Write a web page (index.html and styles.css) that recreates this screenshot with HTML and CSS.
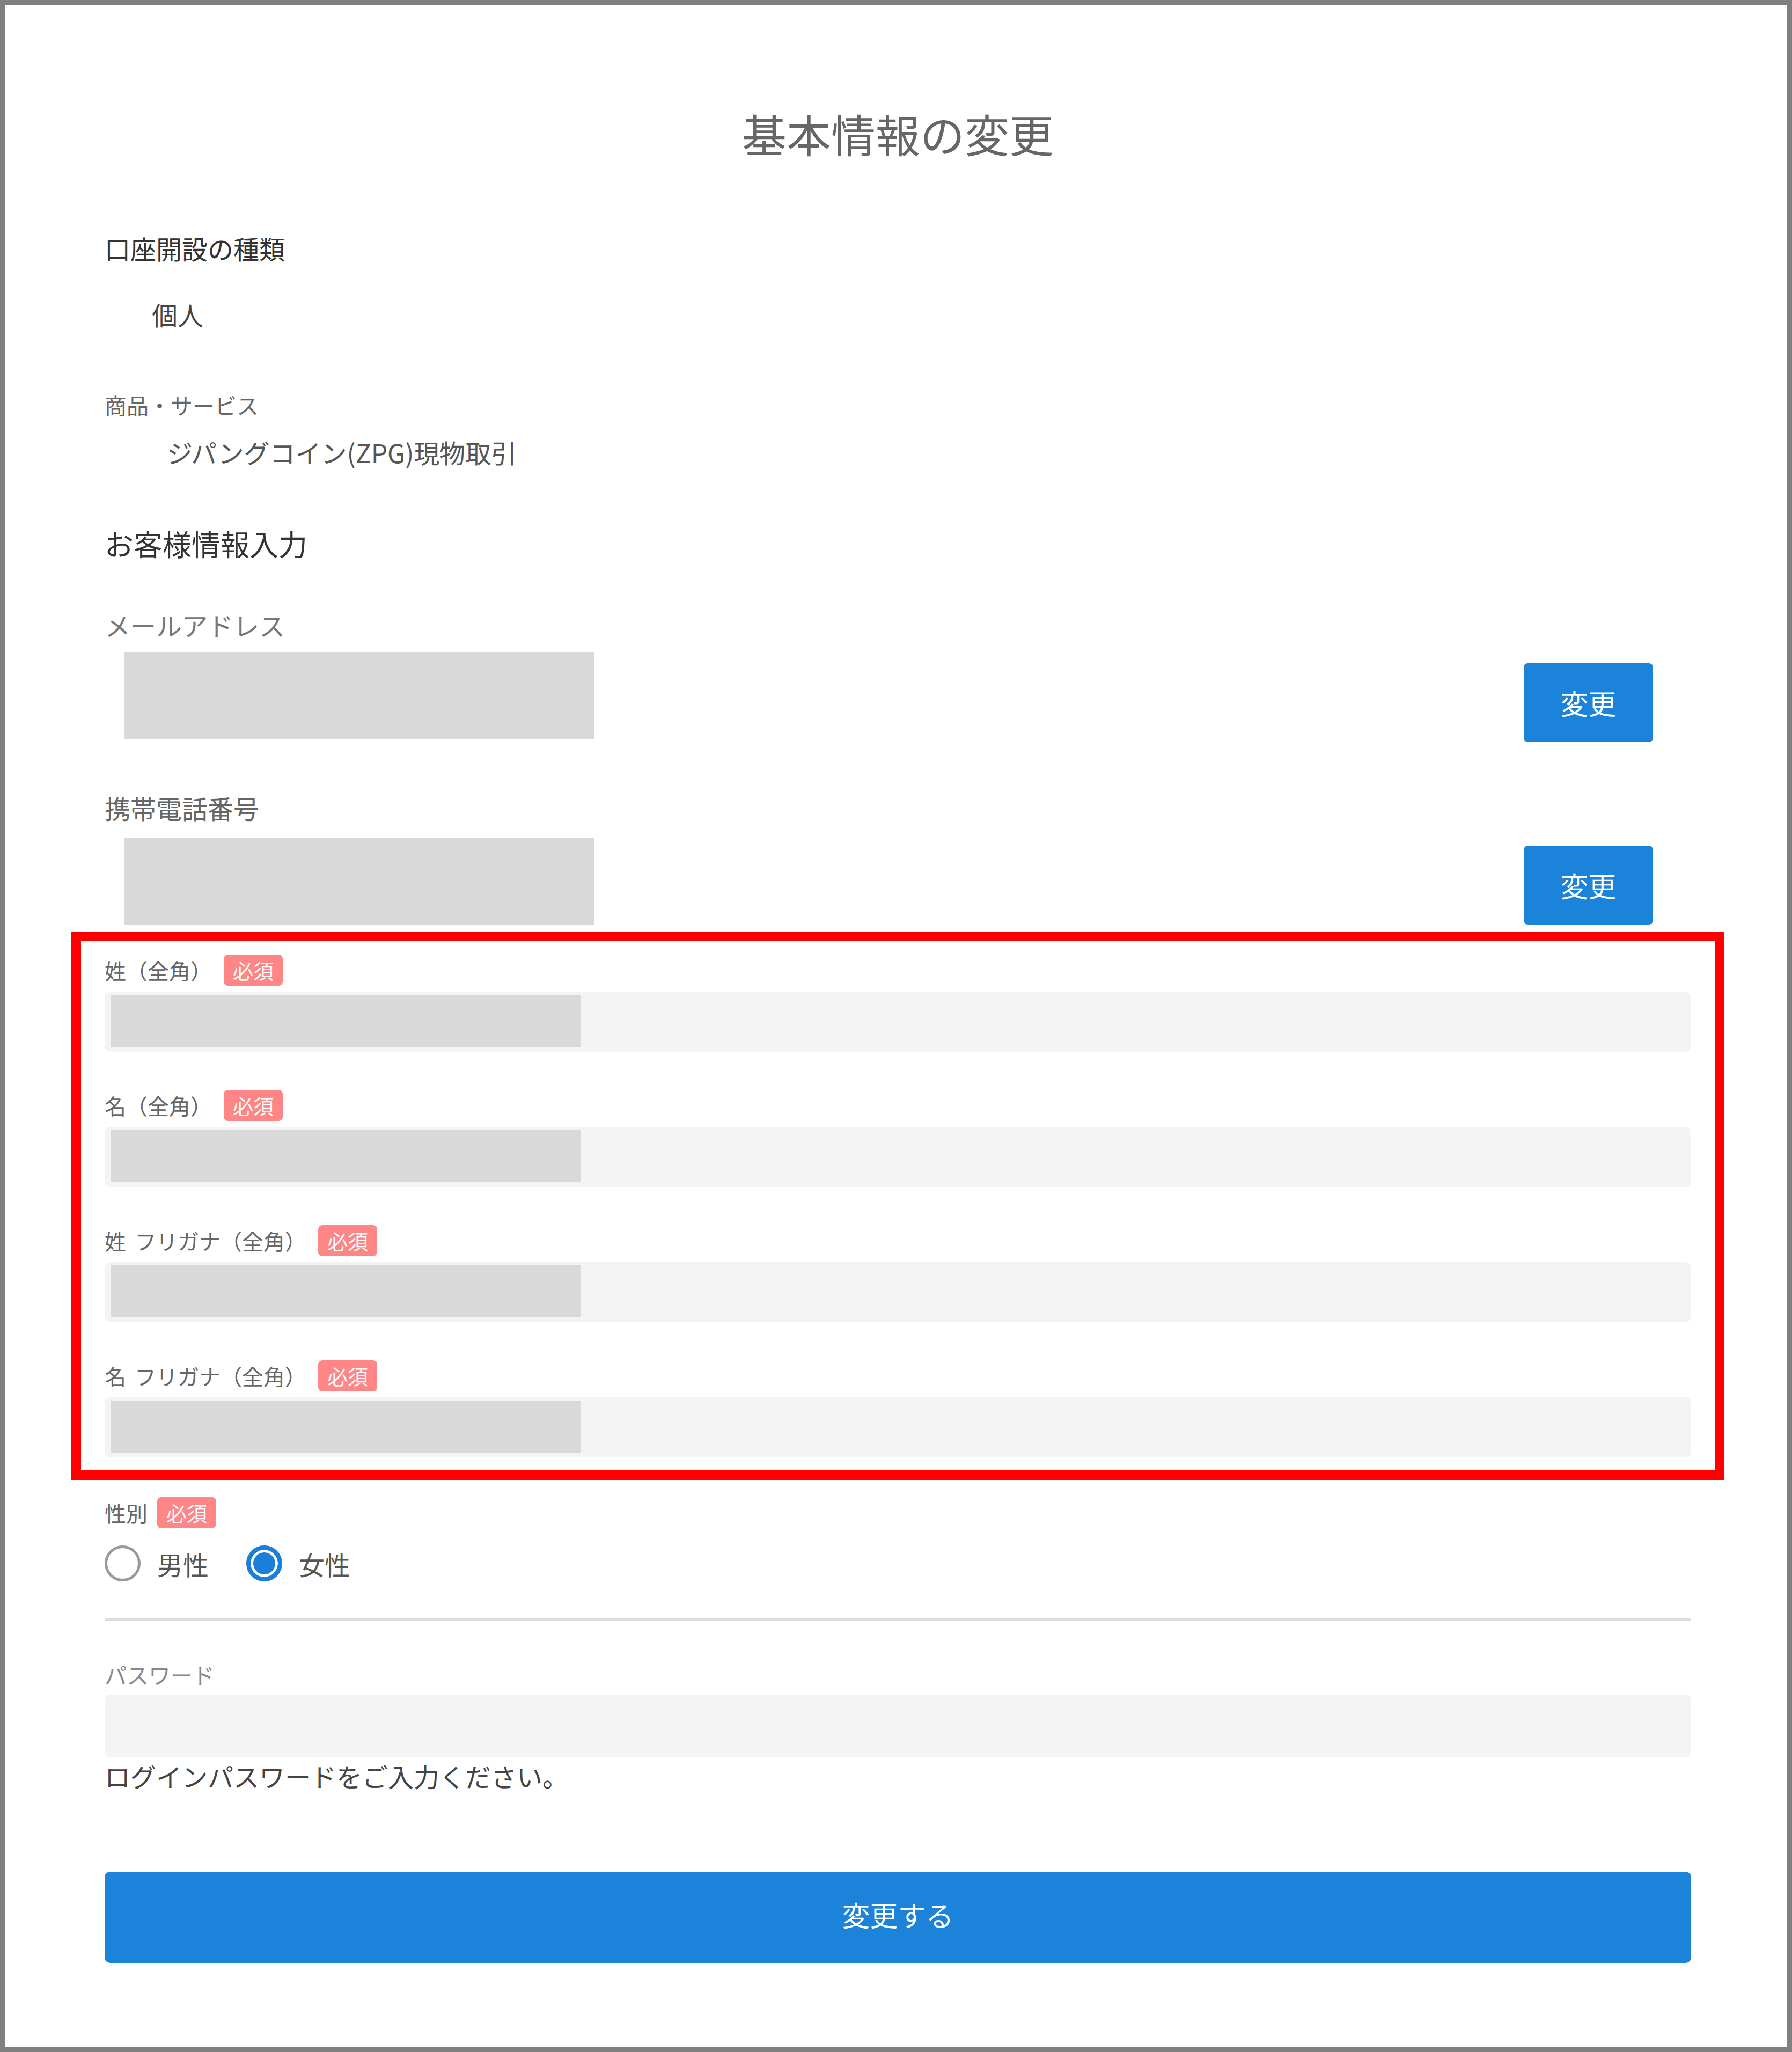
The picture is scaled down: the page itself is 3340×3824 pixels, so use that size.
FILE: index.html
```html
<!DOCTYPE html>
<html lang="ja">

<head>
    <meta charset="UTF-8">
    <title>基本情報の変更</title>
    <link rel="stylesheet" href="styles.css">
</head>

<body>
    <div class="page">
        <h1 class="title">基本情報の変更</h1>

        <h2 class="info-head">口座開設の種類</h2>
        <p class="info-value">個人</p>

        <h3 class="info-sub">商品・サービス</h3>
        <p class="info-value service">ジパングコイン(ZPG)現物取引</p>

        <h2 class="section-head">お客様情報入力</h2>

        <div class="contact">
            <div class="contact-label">メールアドレス</div>
            <div class="contact-row">
                <span class="masked"></span>
                <button class="btn-change">変更</button>
            </div>
        </div>

        <div class="contact contact-phone">
            <div class="contact-label">携帯電話番号</div>
            <div class="contact-row">
                <span class="masked"></span>
                <button class="btn-change">変更</button>
            </div>
        </div>

        <div class="highlight">
            <div class="field">
                <div class="field-label"><span>姓（全角）</span><span class="req">必須</span></div>
                <div class="field-input"><span class="mask"></span></div>
            </div>
            <div class="field">
                <div class="field-label"><span>名（全角）</span><span class="req">必須</span></div>
                <div class="field-input"><span class="mask"></span></div>
            </div>
            <div class="field">
                <div class="field-label"><span>姓 フリガナ（全角）</span><span class="req">必須</span></div>
                <div class="field-input"><span class="mask"></span></div>
            </div>
            <div class="field">
                <div class="field-label"><span>名 フリガナ（全角）</span><span class="req">必須</span></div>
                <div class="field-input"><span class="mask"></span></div>
            </div>
        </div>

        <div class="field-label gender-label"><span>性別</span><span class="req">必須</span></div>
        <div class="radios">
            <label class="radio"><input type="radio" name="gender"><span>男性</span></label>
            <label class="radio"><input type="radio" name="gender" checked><span>女性</span></label>
        </div>

        <hr class="divider">

        <div class="pw-label">パスワード</div>
        <div class="pw-input"></div>
        <p class="pw-help">ログインパスワードをご入力ください。</p>

        <button class="submit">変更する</button>
    </div>
</body>

</html>
```

FILE: styles.css
```css
* {
    box-sizing: border-box;
}

body {
    margin: 0;
    font-family: "Noto Sans CJK JP", "Noto Sans", sans-serif;
    background: #fff;
}

h1,
h2,
h3,
p {
    margin: 0;
    font-weight: normal;
}

.page {
    width: 3340px;
    height: 3824px;
    border: 9px solid #808080;
    padding: 189px 179px 0 186px;
    background: #fff;
}

.title {
    font-size: 83px;
    line-height: 100px;
    text-align: center;
    color: #666;
}

.info-head {
    margin-top: 128px;
    font-size: 48px;
    line-height: 72px;
    color: #333;
}

.info-value {
    margin-top: 51px;
    padding-left: 88px;
    font-size: 48px;
    line-height: 72px;
    color: #444;
}

.info-sub {
    margin-top: 103px;
    font-size: 41px;
    line-height: 60px;
    color: #666;
}

.info-value.service {
    margin-top: 22px;
    padding-left: 116px;
    color: #555;
}

.section-head {
    margin-top: 96px;
    font-size: 54px;
    line-height: 78px;
    color: #333;
}

.contact-label {
    margin-top: 78px;
    font-size: 48px;
    line-height: 68px;
    color: #777;
}

.contact-row {
    display: flex;
    align-items: flex-start;
    margin-top: 17px;
}

.masked {
    display: block;
    width: 875px;
    height: 163px;
    margin-left: 37px;
    background: #d9d9d9;
}

.btn-change {
    width: 241px;
    height: 147px;
    margin: 21px 71px 0 auto;
    border: none;
    border-radius: 8px;
    background: #1b83da;
    color: #fff;
    font-family: inherit;
    font-size: 52px;
    cursor: pointer;
}

.contact-phone .contact-label {
    margin-top: 88px;
    color: #666;
}

.contact-phone .contact-row {
    margin-top: 23px;
}

.contact-phone .masked {
    height: 161px;
}

.contact-phone .btn-change {
    margin-top: 14px;
}

/* red annotation frame */
.highlight {
    margin: 13px -62px 0;
    border: 18px solid #f00;
    padding: 25px 44px 24px;
}

.field + .field {
    margin-top: 71px;
}

.field-label {
    display: flex;
    align-items: center;
    height: 58px;
    font-size: 40px;
    word-spacing: 7px;
    color: #666;
}

.req {
    margin-left: 22px;
    padding: 0 17px;
    height: 58px;
    line-height: 58px;
    border-radius: 8px;
    background: #ff8686;
    color: #fff;
    font-size: 38px;
}

.field-input {
    margin-top: 11px;
    height: 112px;
    padding: 6px 0 0 11px;
    border-radius: 10px;
    background: #f4f4f4;
}

.mask {
    display: block;
    width: 876px;
    height: 97px;
    background: #d9d9d9;
}

.gender-label {
    margin-top: 32px;
}

.gender-label .req {
    margin-left: 18px;
}

.radios {
    display: flex;
    align-items: center;
    margin-top: 32px;
    height: 67px;
}

.radio {
    display: flex;
    align-items: center;
    font-size: 48px;
    color: #555;
}

.radio + .radio {
    margin-left: 70px;
}

.radio span {
    margin-left: 31px;
}

.radio input {
    appearance: none;
    width: 67px;
    height: 67px;
    margin: 0;
    border: 5px solid #999;
    border-radius: 50%;
    background: #fff;
}

.radio input:checked {
    border: 8px solid #1a7fd8;
    background: #1a7fd8;
    box-shadow: inset 0 0 0 5px #fff;
}

.divider {
    margin: 68px 0 0;
    height: 6px;
    border: none;
    background: #dcdcdc;
}

.pw-label {
    margin-top: 69px;
    font-size: 41px;
    line-height: 60px;
    color: #888;
}

.pw-input {
    margin-top: 8px;
    height: 117px;
    border-radius: 10px;
    background: #f4f4f4;
}

.pw-help {
    margin-top: 4px;
    font-size: 48px;
    line-height: 60px;
    color: #444;
}

.submit {
    display: block;
    width: 100%;
    height: 170px;
    margin-top: 149px;
    padding-bottom: 12px;
    border: none;
    border-radius: 10px;
    background: #1b83da;
    color: #fff;
    font-family: inherit;
    font-size: 52px;
    cursor: pointer;
}
```
